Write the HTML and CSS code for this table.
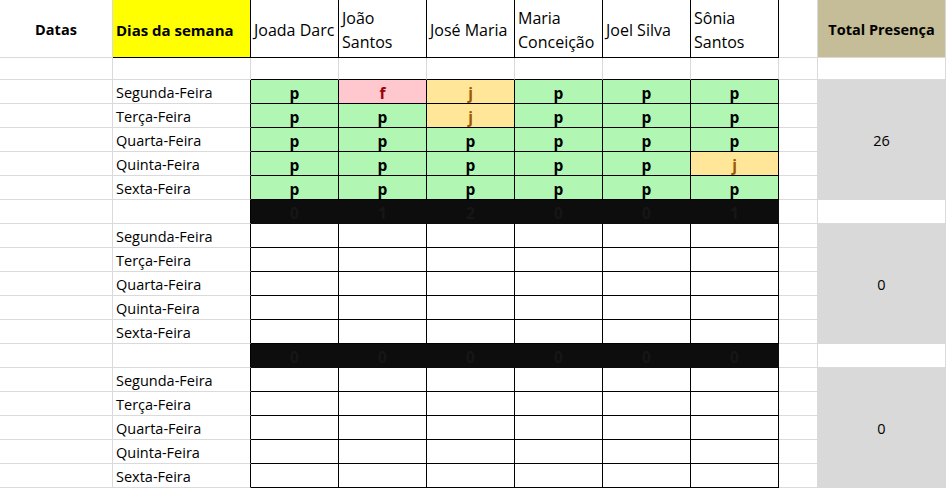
FILE: index.html
```html
<!DOCTYPE html>
<html lang="pt">
<head>
<meta charset="utf-8">
<title>Presença</title>
<link rel="stylesheet" href="styles.css">
</head>
<body>
<div class="sheet">
  <!-- header -->
  <div class="c hd ca">Datas</div>
  <div class="c hd cb yel">Dias da semana</div>
  <div class="c hn">Joada Darc</div>
  <div class="c hn">João<br>Santos</div>
  <div class="c hn">José Maria</div>
  <div class="c hn">Maria<br>Conceição</div>
  <div class="c hn">Joel Silva</div>
  <div class="c hn">Sônia<br>Santos</div>
  <div class="c"></div>
  <div class="c hd tan">Total Presença</div>

  <!-- blank row -->
  <div class="c"></div><div class="c"></div>
  <div class="c bb"></div><div class="c bb"></div><div class="c bb"></div><div class="c bb"></div><div class="c bb"></div><div class="c bb"></div>
  <div class="c"></div><div class="c"></div>

  <!-- block 1 -->
  <div class="c"></div><div class="c day">Segunda-Feira</div>
  <div class="c d g">p</div><div class="c d r">f</div><div class="c d y">j</div><div class="c d g">p</div><div class="c d g">p</div><div class="c d g">p</div>
  <div class="c"></div><div class="c tot">26</div>

  <div class="c"></div><div class="c day">Terça-Feira</div>
  <div class="c d g">p</div><div class="c d g">p</div><div class="c d y">j</div><div class="c d g">p</div><div class="c d g">p</div><div class="c d g">p</div>
  <div class="c"></div>

  <div class="c"></div><div class="c day">Quarta-Feira</div>
  <div class="c d g">p</div><div class="c d g">p</div><div class="c d g">p</div><div class="c d g">p</div><div class="c d g">p</div><div class="c d g">p</div>
  <div class="c"></div>

  <div class="c"></div><div class="c day">Quinta-Feira</div>
  <div class="c d g">p</div><div class="c d g">p</div><div class="c d g">p</div><div class="c d g">p</div><div class="c d g">p</div><div class="c d y">j</div>
  <div class="c"></div>

  <div class="c"></div><div class="c day">Sexta-Feira</div>
  <div class="c d g">p</div><div class="c d g">p</div><div class="c d g">p</div><div class="c d g">p</div><div class="c d g">p</div><div class="c d g">p</div>
  <div class="c"></div>

  <div class="c"></div><div class="c day"></div>
  <div class="c d k">0</div><div class="c d k">1</div><div class="c d k">2</div><div class="c d k">0</div><div class="c d k">0</div><div class="c d k">1</div>
  <div class="c"></div><div class="c wt"></div>

  <!-- block 2 -->
  <div class="c"></div><div class="c day">Segunda-Feira</div>
  <div class="c d"></div><div class="c d"></div><div class="c d"></div><div class="c d"></div><div class="c d"></div><div class="c d"></div>
  <div class="c"></div><div class="c tot">0</div>

  <div class="c"></div><div class="c day">Terça-Feira</div>
  <div class="c d"></div><div class="c d"></div><div class="c d"></div><div class="c d"></div><div class="c d"></div><div class="c d"></div>
  <div class="c"></div>

  <div class="c"></div><div class="c day">Quarta-Feira</div>
  <div class="c d"></div><div class="c d"></div><div class="c d"></div><div class="c d"></div><div class="c d"></div><div class="c d"></div>
  <div class="c"></div>

  <div class="c"></div><div class="c day">Quinta-Feira</div>
  <div class="c d"></div><div class="c d"></div><div class="c d"></div><div class="c d"></div><div class="c d"></div><div class="c d"></div>
  <div class="c"></div>

  <div class="c"></div><div class="c day">Sexta-Feira</div>
  <div class="c d"></div><div class="c d"></div><div class="c d"></div><div class="c d"></div><div class="c d"></div><div class="c d"></div>
  <div class="c"></div>

  <div class="c"></div><div class="c day"></div>
  <div class="c d k">0</div><div class="c d k">0</div><div class="c d k">0</div><div class="c d k">0</div><div class="c d k">0</div><div class="c d k">0</div>
  <div class="c"></div><div class="c wt"></div>

  <!-- block 3 -->
  <div class="c"></div><div class="c day">Segunda-Feira</div>
  <div class="c d"></div><div class="c d"></div><div class="c d"></div><div class="c d"></div><div class="c d"></div><div class="c d"></div>
  <div class="c"></div><div class="c tot">0</div>

  <div class="c"></div><div class="c day">Terça-Feira</div>
  <div class="c d"></div><div class="c d"></div><div class="c d"></div><div class="c d"></div><div class="c d"></div><div class="c d"></div>
  <div class="c"></div>

  <div class="c"></div><div class="c day">Quarta-Feira</div>
  <div class="c d"></div><div class="c d"></div><div class="c d"></div><div class="c d"></div><div class="c d"></div><div class="c d"></div>
  <div class="c"></div>

  <div class="c"></div><div class="c day">Quinta-Feira</div>
  <div class="c d"></div><div class="c d"></div><div class="c d"></div><div class="c d"></div><div class="c d"></div><div class="c d"></div>
  <div class="c"></div>

  <div class="c"></div><div class="c day">Sexta-Feira</div>
  <div class="c d"></div><div class="c d"></div><div class="c d"></div><div class="c d"></div><div class="c d"></div><div class="c d"></div>
  <div class="c"></div>
</div>
</body>
</html>
```
FILE: styles.css
```css
html, body {
  margin: 0;
  padding: 0;
  background: #ffffff;
}
.sheet {
  display: grid;
  grid-template-columns: 113px 138px repeat(6, 88px) 39px 128px;
  grid-template-rows: 58px 22px repeat(17, 24px);
  width: 946px;
  height: 488px;
  overflow: hidden;
  font-family: "Open Sans", "Liberation Sans", sans-serif;
  font-size: 14.5px;
  color: #000;
}
.c {
  box-sizing: border-box;
  border-right: 1px solid #dadada;
  border-bottom: 1px solid #dadada;
  padding-top: 2px;
  display: flex;
  align-items: center;
  overflow: hidden;
  white-space: nowrap;
  line-height: 24px;
}
.hd { font-weight: bold; justify-content: center; }
.ca { justify-content: center; }
.cb {
  justify-content: flex-start;
  padding-left: 3px;
  font-size: 15px;
}
.yel {
  background: #ffff00;
  border-right: 1px solid #000;
  border-bottom: 1px solid #000;
}
.hn {
  padding-left: 3px;
  font-size: 16px;
  border-right: 1px solid #000;
  border-bottom: 1px solid #000;
}
.tan { background: #c4bd97; }
.bb { border-bottom: 1px solid #000; }
.day {
  padding-left: 3px;
  border-right: 1px solid #000;
}
.d {
  justify-content: center;
  font-weight: bold;
  font-size: 15.5px;
  border-right: 1px solid #000;
  border-bottom: 1px solid #000;
  background: #ffffff;
}
.g { background: #b2f6b4; color: #000; }
.r { background: #ffc7ce; color: #9c0006; }
.y { background: #ffe699; color: #9c5700; }
.k { background: #0d0d0d; color: #161616; border-color: #0d0d0d; }
.tot {
  grid-row: span 5;
  justify-content: center;
  background: #d9d9d9;
  border-right: 1px solid #d9d9d9;
  border-bottom: 1px solid #d9d9d9;
}
.wt { background: #ffffff; }
```
